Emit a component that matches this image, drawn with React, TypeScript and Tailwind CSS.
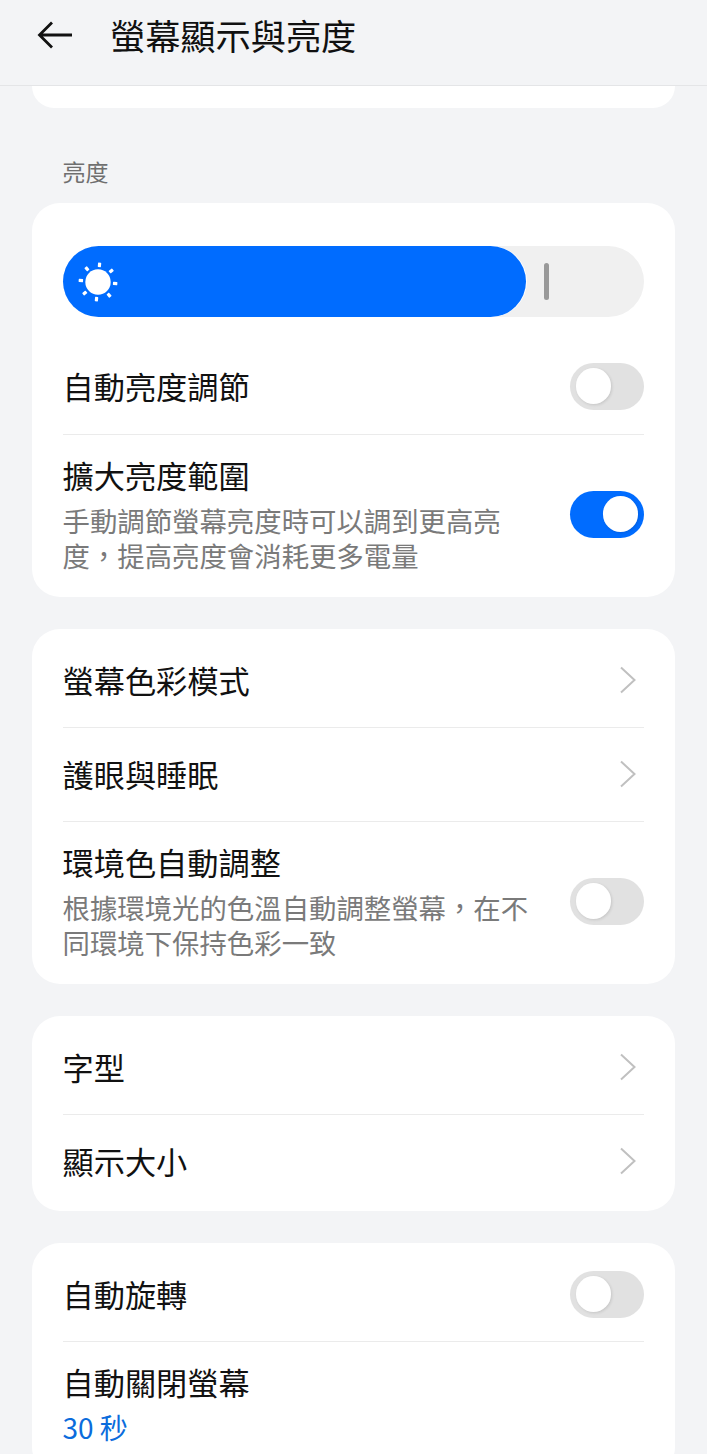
import { ReactNode } from "react";

const FONT = { fontFamily: '"Noto Sans CJK TC", "Noto Sans", sans-serif' };

const Toggle = ({ on = false }: { on?: boolean }) => (
  <div
    className={`flex h-[47px] w-[74.5px] shrink-0 items-center rounded-full px-[6px] ${
      on ? "justify-end bg-[#006cff]" : "justify-start bg-[#e1e1e1]"
    }`}
  >
    <div className="h-[35.5px] w-[35.5px] rounded-full bg-white shadow-[1px_1px_3px_rgba(0,0,0,0.12)]" />
  </div>
);

const Chevron = () => (
  <svg width="18" height="28" viewBox="0 0 18 28" fill="none" className="shrink-0">
    <path d="M2 1.5 L15.5 14 L2 26.5" stroke="#c0c0c0" strokeWidth="2" />
  </svg>
);

const Divider = () => <div className="h-px bg-[#ebebeb]" />;

const Title = ({ children }: { children: ReactNode }) => (
  <div className="text-[31.2px] leading-[40px] text-[#111111]">{children}</div>
);

const NavRow = ({ title, height }: { title: string; height: string }) => (
  <div className={`flex items-center justify-between pr-[7px] ${height}`}>
    <Title>{title}</Title>
    <Chevron />
  </div>
);

// Setting with a two-line explanation under its title and a switch on the right
const DescRow = ({ title, desc, width, on }: { title: string; desc: string; width: string; on?: boolean }) => (
  <div className="flex h-[162px] items-center justify-between pb-[4px]">
    <div className={`mb-[1px] ${width}`}>
      <Title>{title}</Title>
      <div className="mt-[8px] text-[27.4px] leading-[35px] text-[#7a7a7a]">{desc}</div>
    </div>
    <Toggle on={on} />
  </div>
);

const Card = ({ children }: { children: ReactNode }) => (
  <div className="rounded-[28px] bg-white px-[31px]">{children}</div>
);

const SunIcon = () => (
  <svg width="42" height="42" viewBox="0 0 42 42" className="shrink-0">
    <circle cx="21" cy="21" r="12.7" fill="white" />
    {[5, 50, 95, 140, 185, 230, 275, 320].map((deg) => (
      <rect
        key={deg}
        x="19.4"
        y="1.6"
        width="3.2"
        height="4.4"
        rx="0.6"
        fill="white"
        transform={`rotate(${deg} 21 21)`}
      />
    ))}
  </svg>
);

export default function App() {
  return (
    <div className="h-[1454px] overflow-hidden bg-[#f3f4f6]" style={FONT}>
      <header className="flex h-[86px] items-center border-b border-[#e4e5e7] pb-[16px]">
        <svg width="36" height="28" viewBox="0 0 36 28" fill="none" className="ml-[37px]">
          <path d="M35 14 H3 M15 1.5 L2.5 14 L15 26.5" stroke="#111111" strokeWidth="2.8" />
        </svg>
        <h1 className="ml-[37px] text-[35.2px] font-normal leading-[44px] text-[#111111]">
          螢幕顯示與亮度
        </h1>
      </header>

      <div className="flex flex-col pl-[31.5px] pr-[32px]">
        <div className="h-[22px] rounded-b-[28px] bg-white" />

        <div className="pl-[31px] pt-[47px] pb-[16px] text-[23px] leading-[32px] text-[#6f6f6f]">亮度</div>

        <Card>
          <div className="pt-[43px]">
            <div className="relative h-[71px] rounded-full bg-[#f0f0f0]">
              <div className="flex h-full w-[463px] items-center rounded-full bg-[#006cff] pl-[14px] shadow-[1px_0_0_white]">
                <SunIcon />
              </div>
              <div className="absolute left-[481px] top-[17px] h-[37px] w-[5.5px] rounded-full bg-[#999999]" />
            </div>
          </div>
          <div className="flex h-[117px] items-center justify-between pt-[21px]">
            <Title>自動亮度調節</Title>
            <Toggle />
          </div>
          <Divider />
          <DescRow
            title="擴大亮度範圍"
            desc="手動調節螢幕亮度時可以調到更高亮度，提高亮度會消耗更多電量"
            width="w-[460px]"
            on
          />
        </Card>

        <div className="mt-[32px]">
          <Card>
            <NavRow title="螢幕色彩模式" height="h-[98px] pt-[3px]" />
            <Divider />
            <NavRow title="護眼與睡眠" height="h-[93px] pb-[2px]" />
            <Divider />
            <DescRow
              title="環境色自動調整"
              desc="根據環境光的色溫自動調整螢幕，在不同環境下保持色彩一致"
              width="w-[470px]"
            />
          </Card>
        </div>

        <div className="mt-[32px]">
          <Card>
            <NavRow title="字型" height="h-[98px] pt-[3px]" />
            <Divider />
            <NavRow title="顯示大小" height="h-[96px] pb-[5px]" />
          </Card>
        </div>

        <div className="mt-[32px]">
          <Card>
            <div className="flex h-[98px] items-center justify-between pt-[4px]">
              <Title>自動旋轉</Title>
              <Toggle />
            </div>
            <Divider />
            <div className="pt-[20px] pb-[30px]">
              <Title>自動關閉螢幕</Title>
              <div className="mt-[7px] text-[28px] leading-[36px] text-[#0b6cdc]">30 秒</div>
            </div>
          </Card>
        </div>
      </div>
    </div>
  );
}
